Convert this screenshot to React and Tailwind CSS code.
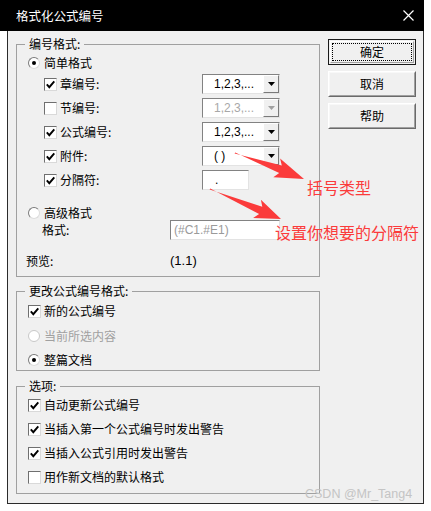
import React from 'react';

const cjk = "font-['Noto_Sans_CJK_SC','Noto_Sans',sans-serif]";
const lat = "font-['Liberation_Sans',Arial,sans-serif]";

function Check({ on }) {
  return (
    <span className="w-[13px] h-[13px] shrink-0 bg-white border border-t-[#6f6f6f] border-l-[#6f6f6f] border-r-[#d9d9d9] border-b-[#d9d9d9] flex items-center justify-center">
      {on && (
        <svg width="9" height="9" viewBox="0 0 9 9">
          <path d="M0.8 4.4 L3.3 7.2 L8.3 1.3" stroke="#000" strokeWidth="1.9" fill="none" />
        </svg>
      )}
    </span>
  );
}

function Radio({ on, off }) {
  return (
    <span className={`w-[12px] h-[12px] shrink-0 rounded-full bg-white border flex items-center justify-center ${off ? 'border-[#c8c8c8]' : 'border-t-[#7a7a7a] border-l-[#7a7a7a] border-r-[#dcdcdc] border-b-[#dcdcdc]'}`}>
      {on && <span className="w-[4px] h-[4px] rounded-full bg-black" />}
    </span>
  );
}

function Combo({ text, off }) {
  return (
    <div className="w-[78px] h-[20px] flex bg-white border border-t-[#828282] border-l-[#828282] border-r-[#e3e3e3] border-b-[#e3e3e3]">
      <span className={`flex-1 pl-[11px] text-[12px] leading-[18px] ${lat} ${off ? 'text-[#a8a8a8]' : 'text-black'}`}>{text}</span>
      <span className="w-[16px] h-full bg-[#f0f0f0] border border-t-white border-l-white border-r-[#7a7a7a] border-b-[#7a7a7a] flex items-center justify-center">
        <svg width="7" height="4" viewBox="0 0 7 4">
          <path d="M0 0 H7 L3.5 4 Z" fill={off ? '#a0a0a0' : '#000'} />
        </svg>
      </span>
    </div>
  );
}

function Group({ label, className, children }) {
  return (
    <fieldset className={`border border-[#a0a0a0] ${className}`}>
      <legend className="ml-[8px] px-[4px] text-[12px] leading-[18px]">{label}</legend>
      {children}
    </fieldset>
  );
}

function NumRow({ label, on, className, children }) {
  return (
    <div className={`h-[20px] flex items-center ${className}`}>
      <div className="w-[185px] pl-[27px] flex items-center gap-[3px]">
        <Check on={on} />
        <span className="text-[12px] leading-[18px]">{label}</span>
      </div>
      {children}
    </div>
  );
}

function Btn({ label, main }) {
  if (main) {
    return (
      <button className="w-[88px] h-[26px] border border-[#1a1a1a] bg-[#f0f0f0] p-[1px]">
        <div className="h-full border border-t-white border-l-white border-r-[#a0a0a0] border-b-[#a0a0a0] p-[1px]">
          <div className="h-full border border-dotted border-black flex items-center justify-center text-[12px]">{label}</div>
        </div>
      </button>
    );
  }
  return (
    <button className="w-[88px] h-[26px] border border-t-white border-l-white border-r-[#6a6a6a] border-b-[#6a6a6a] bg-[#f0f0f0]">
      <div className="h-full border border-t-[#f8f8f8] border-l-[#f8f8f8] border-r-[#a0a0a0] border-b-[#a0a0a0] flex items-center justify-center text-[12px]">{label}</div>
    </button>
  );
}

export default function App() {
  return (
    <div className={`relative w-[431px] h-[511px] bg-white overflow-hidden text-black ${cjk}`}>
      <div className="w-[424px] h-[31px] bg-black flex items-center justify-between pl-[16px] pr-[10px]">
        <span className="text-white text-[12.5px] leading-[18px]">格式化公式编号</span>
        <svg width="11" height="11" viewBox="0 0 11 11">
          <path d="M0.5 0.5 L10.5 10.5 M10.5 0.5 L0.5 10.5" stroke="#fff" strokeWidth="1.2" />
        </svg>
      </div>

      <div className="ml-[7px] w-[417px] h-[473px] bg-[#f0f0f0] border-l border-r border-b border-[#2b2b2b] flex pl-[8px]">
        <div className="w-[304px] pt-[4px] flex flex-col">
          <Group label="编号格式:" className="pb-[5px]">
            <div className="h-[20px] pl-[11px] flex items-center gap-[4px]">
              <Radio on />
              <span className="text-[12px] leading-[18px]">简单格式</span>
            </div>
            <NumRow label="章编号:" on className="mt-[1px]"><Combo text="1,2,3,..." /></NumRow>
            <NumRow label="节编号:" className="mt-[4px]"><Combo text="1,2,3,..." off /></NumRow>
            <NumRow label="公式编号:" on className="mt-[4px]"><Combo text="1,2,3,..." /></NumRow>
            <NumRow label="附件:" on className="mt-[4px]"><Combo text="( )" /></NumRow>
            <NumRow label="分隔符:" on className="mt-[4px]">
              <div className={`w-[47px] h-[20px] bg-white border border-t-[#828282] border-l-[#828282] border-r-[#e3e3e3] border-b-[#e3e3e3] pl-[12px] text-[12px] leading-[18px] ${lat}`}>.</div>
            </NumRow>
            <div className="h-[16px] mt-[15px] pl-[11px] flex items-center gap-[4px]">
              <Radio />
              <span className="text-[12px] leading-[18px]">高级格式</span>
            </div>
            <div className="h-[20px] mt-[-1px] flex items-center">
              <span className="w-[153px] pl-[25px] text-[12px] leading-[18px]">格式:</span>
              <div className={`w-[110px] h-[20px] bg-white border border-t-[#828282] border-l-[#828282] border-r-[#e3e3e3] border-b-[#e3e3e3] pl-[3px] text-[12px] leading-[18px] text-[#9a9a9a] ${lat}`}>(#C1.#E1)</div>
            </div>
            <div className="h-[20px] mt-[11px] flex items-center">
              <span className="w-[153px] pl-[9px] text-[12px] leading-[18px]">预览:</span>
              <span className={`text-[13px] leading-[18px] ${lat}`}>(1.1)</span>
            </div>
          </Group>

          <Group label="更改公式编号格式:" className="mt-[5px] pb-[1px]">
            <div className="h-[18px] mt-[2px] pl-[11px] flex items-center gap-[3px]">
              <Check on />
              <span className="text-[12px] leading-[18px]">新的公式编号</span>
            </div>
            <div className="h-[18px] mt-[7px] pl-[11px] flex items-center gap-[4px]">
              <Radio off />
              <span className="text-[12px] leading-[18px] text-[#a0a0a0]">当前所选内容</span>
            </div>
            <div className="h-[18px] mt-[6px] pl-[11px] flex items-center gap-[4px]">
              <Radio on />
              <span className="text-[12px] leading-[18px]">整篇文档</span>
            </div>
          </Group>

          <Group label="选项:" className="mt-[6px] pb-[7px]">
            {[
              ['自动更新公式编号', true],
              ['当插入第一个公式编号时发出警告', true],
              ['当插入公式引用时发出警告', true],
              ['用作新文档的默认格式', false],
            ].map(([t, on], i) => (
              <div key={i} className={`h-[18px] pl-[11px] flex items-center gap-[3px] ${i === 0 ? 'mt-[1px]' : 'mt-[6px]'}`}>
                <Check on={on} />
                <span className="text-[12px] leading-[18px]">{t}</span>
              </div>
            ))}
          </Group>
        </div>

        <div className="ml-[8px] pt-[8px] flex flex-col gap-[6px]">
          <Btn label="确定" main />
          <Btn label="取消" />
          <Btn label="帮助" />
        </div>
      </div>

      {/* red annotations drawn over the dialog */}
      <svg className="absolute left-0 top-0 pointer-events-none" width="431" height="511" viewBox="0 0 431 511">
        <polygon points="234.6,153.6 281.8,165.4 280.1,158.5 304,179 273.3,177.3 279.2,173 235.2,152.4" fill="#fb3b3b" />
        <polygon points="209.6,189.6 262.3,206.7 260.9,199.7 281,219 253.1,218.1 259.1,214.1 210.2,188.4" fill="#fb3b3b" />
      </svg>
      <span className="absolute left-[307px] top-[178px] text-[16px] leading-[18px] text-[#fb3b3b]">括号类型</span>
      <span className="absolute left-[275px] top-[223px] text-[16px] leading-[18px] text-[#fb3b3b]">设置你想要的分隔符</span>
      <span className={`absolute left-[305px] top-[486px] text-[12.5px] leading-[16px] text-[#c4c4c4] ${lat}`}>CSDN @Mr_Tang4</span>
    </div>
  );
}
